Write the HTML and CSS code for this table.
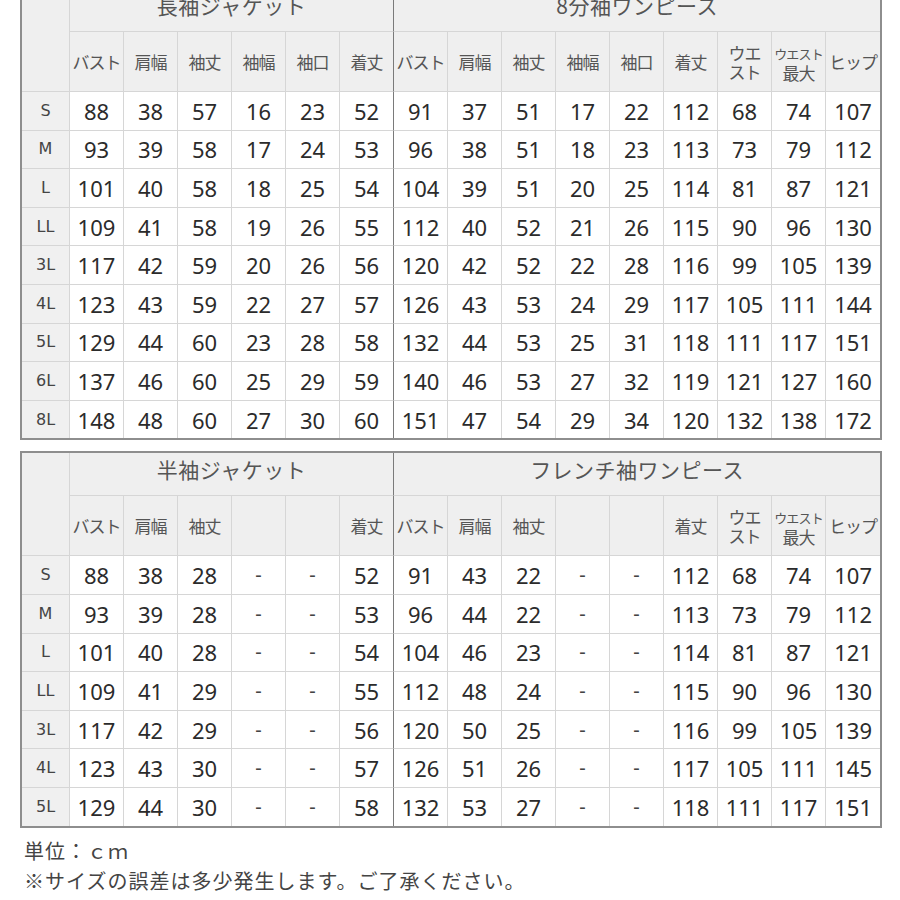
FILE: index.html
```html
<!DOCTYPE html>
<html lang="ja">
<head>
<meta charset="utf-8">
<link rel="stylesheet" href="styles.css">
</head>
<body>
<div class="page">
<table class="chart first">
<colgroup><col class="c-size"><col span="15" class="c-data"></colgroup>
<tr class="r-title">
<td class="sz hd" rowspan="2"></td>
<td class="title endL" colspan="6">長袖ジャケット</td>
<td class="title last" colspan="9">8分袖ワンピース</td>
</tr>
<tr class="r-head">
<td class="hc">バスト</td><td class="hc">肩幅</td><td class="hc">袖丈</td><td class="hc">袖幅</td><td class="hc">袖口</td><td class="hc endL">着丈</td>
<td class="hc">バスト</td><td class="hc">肩幅</td><td class="hc">袖丈</td><td class="hc">袖幅</td><td class="hc">袖口</td><td class="hc">着丈</td><td class="hc two">ウエ<br>スト</td><td class="hc two"><span class="tiny">ウエスト</span><br>最大</td><td class="hc last">ヒップ</td>
</tr>
<tr><td class="sz">S</td><td>88</td><td>38</td><td>57</td><td>16</td><td>23</td><td class="endL">52</td><td>91</td><td>37</td><td>51</td><td>17</td><td>22</td><td>112</td><td>68</td><td>74</td><td class="last">107</td></tr>
<tr><td class="sz">M</td><td>93</td><td>39</td><td>58</td><td>17</td><td>24</td><td class="endL">53</td><td>96</td><td>38</td><td>51</td><td>18</td><td>23</td><td>113</td><td>73</td><td>79</td><td class="last">112</td></tr>
<tr><td class="sz">L</td><td>101</td><td>40</td><td>58</td><td>18</td><td>25</td><td class="endL">54</td><td>104</td><td>39</td><td>51</td><td>20</td><td>25</td><td>114</td><td>81</td><td>87</td><td class="last">121</td></tr>
<tr><td class="sz">LL</td><td>109</td><td>41</td><td>58</td><td>19</td><td>26</td><td class="endL">55</td><td>112</td><td>40</td><td>52</td><td>21</td><td>26</td><td>115</td><td>90</td><td>96</td><td class="last">130</td></tr>
<tr><td class="sz">3L</td><td>117</td><td>42</td><td>59</td><td>20</td><td>26</td><td class="endL">56</td><td>120</td><td>42</td><td>52</td><td>22</td><td>28</td><td>116</td><td>99</td><td>105</td><td class="last">139</td></tr>
<tr><td class="sz">4L</td><td>123</td><td>43</td><td>59</td><td>22</td><td>27</td><td class="endL">57</td><td>126</td><td>43</td><td>53</td><td>24</td><td>29</td><td>117</td><td>105</td><td>111</td><td class="last">144</td></tr>
<tr><td class="sz">5L</td><td>129</td><td>44</td><td>60</td><td>23</td><td>28</td><td class="endL">58</td><td>132</td><td>44</td><td>53</td><td>25</td><td>31</td><td>118</td><td>111</td><td>117</td><td class="last">151</td></tr>
<tr><td class="sz">6L</td><td>137</td><td>46</td><td>60</td><td>25</td><td>29</td><td class="endL">59</td><td>140</td><td>46</td><td>53</td><td>27</td><td>32</td><td>119</td><td>121</td><td>127</td><td class="last">160</td></tr>
<tr class="lastrow"><td class="sz">8L</td><td>148</td><td>48</td><td>60</td><td>27</td><td>30</td><td class="endL">60</td><td>151</td><td>47</td><td>54</td><td>29</td><td>34</td><td>120</td><td>132</td><td>138</td><td class="last">172</td></tr>
</table>

<table class="chart second">
<colgroup><col class="c-size"><col span="15" class="c-data"></colgroup>
<tr class="r-title">
<td class="sz hd" rowspan="2"></td>
<td class="title endL" colspan="6">半袖ジャケット</td>
<td class="title last" colspan="9">フレンチ袖ワンピース</td>
</tr>
<tr class="r-head">
<td class="hc">バスト</td><td class="hc">肩幅</td><td class="hc">袖丈</td><td class="hc"></td><td class="hc"></td><td class="hc endL">着丈</td>
<td class="hc">バスト</td><td class="hc">肩幅</td><td class="hc">袖丈</td><td class="hc"></td><td class="hc"></td><td class="hc">着丈</td><td class="hc two">ウエ<br>スト</td><td class="hc two"><span class="tiny">ウエスト</span><br>最大</td><td class="hc last">ヒップ</td>
</tr>
<tr><td class="sz">S</td><td>88</td><td>38</td><td>28</td><td class="dash">-</td><td class="dash">-</td><td class="endL">52</td><td>91</td><td>43</td><td>22</td><td class="dash">-</td><td class="dash">-</td><td>112</td><td>68</td><td>74</td><td class="last">107</td></tr>
<tr><td class="sz">M</td><td>93</td><td>39</td><td>28</td><td class="dash">-</td><td class="dash">-</td><td class="endL">53</td><td>96</td><td>44</td><td>22</td><td class="dash">-</td><td class="dash">-</td><td>113</td><td>73</td><td>79</td><td class="last">112</td></tr>
<tr><td class="sz">L</td><td>101</td><td>40</td><td>28</td><td class="dash">-</td><td class="dash">-</td><td class="endL">54</td><td>104</td><td>46</td><td>23</td><td class="dash">-</td><td class="dash">-</td><td>114</td><td>81</td><td>87</td><td class="last">121</td></tr>
<tr><td class="sz">LL</td><td>109</td><td>41</td><td>29</td><td class="dash">-</td><td class="dash">-</td><td class="endL">55</td><td>112</td><td>48</td><td>24</td><td class="dash">-</td><td class="dash">-</td><td>115</td><td>90</td><td>96</td><td class="last">130</td></tr>
<tr><td class="sz">3L</td><td>117</td><td>42</td><td>29</td><td class="dash">-</td><td class="dash">-</td><td class="endL">56</td><td>120</td><td>50</td><td>25</td><td class="dash">-</td><td class="dash">-</td><td>116</td><td>99</td><td>105</td><td class="last">139</td></tr>
<tr><td class="sz">4L</td><td>123</td><td>43</td><td>30</td><td class="dash">-</td><td class="dash">-</td><td class="endL">57</td><td>126</td><td>51</td><td>26</td><td class="dash">-</td><td class="dash">-</td><td>117</td><td>105</td><td>111</td><td class="last">145</td></tr>
<tr class="lastrow"><td class="sz">5L</td><td>129</td><td>44</td><td>30</td><td class="dash">-</td><td class="dash">-</td><td class="endL">58</td><td>132</td><td>53</td><td>27</td><td class="dash">-</td><td class="dash">-</td><td>118</td><td>111</td><td>117</td><td class="last">151</td></tr>
</table>

<div class="notes">
<p>単位：ｃｍ</p>
<p>※サイズの誤差は多少発生します。ご了承ください。</p>
</div>
</div>
</body>
</html>
```

FILE: styles.css
```css
html, body {
  margin: 0;
  padding: 0;
  background: #ffffff;
}

body {
  font-family: "Noto Sans CJK JP", sans-serif;
  color: #444;
}

.page {
  padding-left: 20px;
  margin-top: -13px;
}

.chart {
  border-collapse: separate;
  border-spacing: 0;
  table-layout: fixed;
  width: 862px;
  border: 2px solid #8e8e8e;
}

.chart.second {
  margin-top: 11px;
}

.c-size { width: 48px; }
.c-data { width: 54px; }

.chart td {
  padding: 0;
  text-align: center;
  vertical-align: middle;
  border-right: 1px solid #d6d6d6;
  border-bottom: 1px solid #d6d6d6;
  font-family: "Noto Sans", "DejaVu Sans", sans-serif;
  font-size: 22px;
  color: #2b2b2b;
  height: 37.6px;
  line-height: 1;
  white-space: nowrap;
  overflow: visible;
}

.chart td.last { border-right: none; }
.chart tr.lastrow td { border-bottom: none; }

.chart td.endL { border-right: 1px solid #7a7a7a; }

.chart td.sz {
  background: #f0f0f0;
  font-family: "DejaVu Sans", sans-serif;
  font-size: 16px;
  color: #444;
}

.chart td.hd { background: #efefef; }

.chart td.title {
  height: 43px;
  box-sizing: border-box;
  padding-bottom: 9px;
  background: #efefef;
  font-family: "Noto Sans CJK JP", sans-serif;
  font-size: 21px;
  color: #555;
  letter-spacing: 0.5px;
}

.chart td.hc {
  height: 59px;
  background: #efefef;
  font-family: "Noto Sans CJK JP", sans-serif;
  font-size: 17px;
  color: #555;
  letter-spacing: -1px;
}

.chart td.two {
  line-height: 19px;
}

.tiny {
  font-size: 13px;
  letter-spacing: -0.8px;
}

.chart td.dash {
  font-size: 20px;
  color: #444;
}

.notes {
  margin-top: 8px;
  padding-left: 4px;
}

.notes p {
  margin: 0;
  font-family: "Noto Sans CJK JP", sans-serif;
  font-size: 20px;
  line-height: 30px;
  color: #444;
  letter-spacing: 1px;
}
```
